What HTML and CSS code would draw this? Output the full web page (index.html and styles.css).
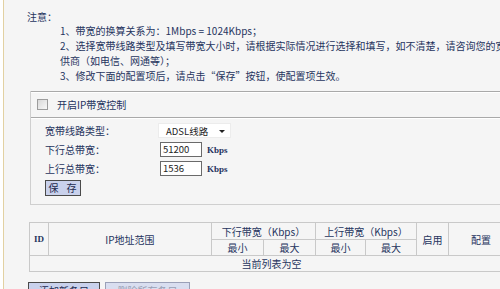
FILE: index.html
```html
<!DOCTYPE html>
<html lang="zh-CN">
<head>
    <meta charset="UTF-8">
    <title>IP带宽控制</title>
    <link rel="stylesheet" href="styles.css">
</head>
<body>
    <div class="page">
        <div class="note">
            <div class="note-title">注意：</div>
            <div class="note-list">
                <div class="note-line">1、带宽的换算关系为：1Mbps = 1024Kbps；</div>
                <div class="note-line">2、选择宽带线路类型及填写带宽大小时，请根据实际情况进行选择和填写，如不清楚，请咨询您的宽带提</div>
                <div class="note-line">供商（如电信、网通等）；</div>
                <div class="note-line">3、修改下面的配置项后，请点击“保存”按钮，使配置项生效。</div>
            </div>
        </div>

        <div class="panel">
            <div class="panel-head">
                <span class="check"></span>
                <span>开启IP带宽控制</span>
            </div>
            <div class="panel-body">
                <div class="form-grid">
                    <span class="label">宽带线路类型：</span>
                    <div class="select">ADSL线路<span class="arrow"></span></div>

                    <span class="label">下行总带宽：</span>
                    <div class="field"><span class="input">51200</span><span class="unit">Kbps</span></div>

                    <span class="label">上行总带宽：</span>
                    <div class="field"><span class="input">1536</span><span class="unit">Kbps</span></div>

                    <button class="btn btn-save">保 存</button>
                </div>
            </div>
        </div>

        <table class="rules">
            <colgroup>
                <col style="width:19px"><col style="width:163px">
                <col style="width:52px"><col style="width:52px">
                <col style="width:50px"><col style="width:51px">
                <col style="width:32px"><col style="width:65px">
            </colgroup>
            <tr class="row-top">
                <td rowspan="2" class="id">ID</td>
                <td rowspan="2">IP地址范围</td>
                <td colspan="2">下行带宽（Kbps）</td>
                <td colspan="2">上行带宽（Kbps）</td>
                <td rowspan="2">启用</td>
                <td rowspan="2">配置</td>
            </tr>
            <tr>
                <td>最小</td><td>最大</td><td>最小</td><td>最大</td>
            </tr>
            <tr>
                <td colspan="8">当前列表为空</td>
            </tr>
        </table>

        <div class="actions">
            <button class="btn btn-add">添加新条目</button>
            <button class="btn btn-off">删除所有条目</button>
        </div>
    </div>
</body>
</html>
```

FILE: styles.css
```css
html, body {
    margin: 0;
    padding: 0;
    background: #ffffff;
    overflow: hidden;
}

body {
    width: 500px;
    height: 289px;
    font-family: "Noto Sans CJK SC", "Liberation Sans", sans-serif;
    font-size: 10px;
    color: #26345e;
}

.page {
    margin-left: 3px;
    border-left: 1px solid #e2d1a2;
    background: #f5f5f5;
    width: 540px;
    height: 289px;
}

.note {
    padding: 10px 0 0 23px;
}

.note-title {
    line-height: 13px;
}

.note-list {
    padding-left: 33px;
}

.note-line {
    line-height: 15px;
    white-space: nowrap;
}

.panel {
    margin: 8px 0 0 26px;
    width: 482px;
    border-left: 1px solid #cfcfcf;
    border-bottom: 1px solid #cfcfcf;
}

.panel-head {
    display: flex;
    align-items: center;
    gap: 9px;
    height: 25px;
    padding-left: 6px;
    border-top: 1px solid #a9a9a9;
    border-bottom: 1px solid #a9a9a9;
    box-shadow: inset 0 1px #ffffff, 0 1px #ffffff;
}

.check {
    width: 9px;
    height: 9px;
    border: 1px solid #9c9c9c;
    background: linear-gradient(135deg, #d8d8d8, #f8f8f8);
}

.panel-body {
    padding: 5px 0 9px 14px;
}

.form-grid {
    display: grid;
    grid-template-columns: 113px auto;
    grid-auto-rows: 15px;
    row-gap: 4px;
    align-items: center;
}

.label {
    line-height: 15px;
}

.select {
    position: relative;
    width: 66px;
    height: 15px;
    line-height: 15px;
    padding-left: 7px;
    background: #ffffff;
    border: 1px solid #ececec;
    box-sizing: border-box;
    width: 73px;
    font-size: 9.5px;
    color: #1d1d1d;
}

.arrow {
    position: absolute;
    right: 5px;
    top: 6px;
    border-left: 3px solid transparent;
    border-right: 3px solid transparent;
    border-top: 3px solid #222;
}

.field {
    display: flex;
    align-items: center;
    gap: 5px;
    padding-left: 2px;
}

.input {
    width: 42px;
    height: 15px;
    box-sizing: border-box;
    border: 1px solid #6a6a6a;
    background: #ffffff;
    padding-left: 2px;
    line-height: 13px;
    font-size: 9.5px;
    color: #1d1d1d;
}

.unit {
    font-family: "Liberation Serif", serif;
    font-weight: bold;
    font-size: 9px;
}

.btn {
    height: 16px;
    padding: 0;
    border: 1px solid #4a4a4a;
    background: #c9d1ec;
    font-family: "Noto Sans CJK SC", sans-serif;
    font-size: 10px;
    line-height: 13px;
    color: #1e2a50;
}

.btn-save {
    width: 36px;
    letter-spacing: 3px;
    padding-left: 2px;
}

.rules {
    margin: 17px 0 0 25px;
    width: 484px;
    table-layout: fixed;
    border-collapse: collapse;
    border: 1px solid #c4c4c4;
}

.rules td {
    height: 15px;
    padding: 0;
    border: 1px solid #c9c9c9;
    text-align: center;
    line-height: 15px;
    white-space: nowrap;
    overflow: hidden;
}

.rules .row-top td {
    height: 16px;
}

.rules .id {
    font-family: "Liberation Serif", serif;
    font-weight: bold;
    font-size: 9px;
}

.actions {
    display: flex;
    gap: 5px;
    margin: 10px 0 0 24px;
}

.btn-add {
    width: 72px;
}

.btn-off {
    width: 85px;
    border-color: #9aa0b8;
    background: #d9def0;
    color: #9aa0b4;
}
```
